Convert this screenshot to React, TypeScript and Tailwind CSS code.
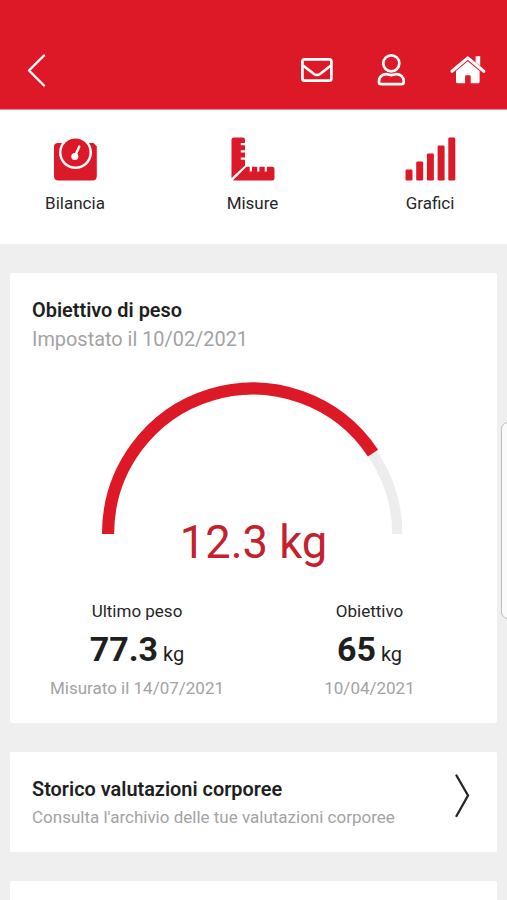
import type { ReactNode } from "react";

function Shortcut({ label, children }: { label: string; children: ReactNode }) {
  return (
    <button className="flex w-[120px] flex-col items-center">
      <svg width="60" height="50" viewBox="0 0 60 50" fill="#dc1928">
        {children}
      </svg>
      <span className="mt-[7px] text-[17px] leading-6 text-[#262626]">{label}</span>
    </button>
  );
}

function Header() {
  return (
    <header className="flex h-[110px] items-end justify-between border-b border-[#e88c93] bg-[#de1927] pr-[20px] pl-[26px] pb-[20px]">
      <svg width="22" height="38" viewBox="0 0 22 38" fill="none" stroke="#fff" strokeWidth="2.4" strokeLinecap="round" strokeLinejoin="round">
        <path d="M18 4.5 3 19.5 18 34.5" />
      </svg>
      <svg width="187" height="38" viewBox="300 51 187 38" fill="none" stroke="#fff" strokeWidth="2.7" strokeLinejoin="round">
        <rect x="302.4" y="59.4" width="29" height="21.2" rx="2.2" />
        <path d="M303 65.5 314 74 Q317 76 320 74 L331 65.5" />
        <circle cx="391.3" cy="63.3" r="8" />
        <path d="M386.3 74.1 Q391.3 76.2 396.3 74.1 C400.5 74.1 403.7 77 403.7 81 V82 Q403.7 84.2 401.5 84.2 H381.2 Q379 84.2 379 82 V81 C379 77 382.1 74.1 386.3 74.1Z" />
        <path d="M452 71.2 467.8 57.9 483.8 71.2" strokeWidth="3.1" strokeLinecap="round" />
        <path d="M475.6 56.2 H480.2 V66 L475.6 62.1Z M467.8 61.2 479.6 71 V82 Q479.6 83.2 478.4 83.2 H470.7 V76.2 Q470.7 75.2 469.7 75.2 H466.1 Q465.1 75.2 465.1 76.2 V83.2 H457.2 Q456 83.2 456 82 V71Z" fill="#fff" stroke="none" />
      </svg>
    </header>
  );
}

function Gauge() {
  return (
    <svg className="block" width="310" height="160" viewBox="97 378 310 160" fill="none">
      <path d="M371.8 452.6 A145 145 0 0 1 397.3 534" stroke="#ededed" strokeWidth="10.2" />
      <path d="M108.1 534 A144.6 145 0 0 1 373 453.1" stroke="#de1927" strokeWidth="12.2" />
    </svg>
  );
}

function Measure({ title, value, note }: { title: string; value: string; note: string }) {
  return (
    <div className="flex flex-col items-center">
      <div className="text-[17px] leading-6 text-[#262626]">{title}</div>
      <div className="mt-[6px] flex h-10 items-baseline gap-[5px] text-[#1f1f1f]">
        <span className="text-[34px] leading-10 font-bold">{value}</span>
        <span className="text-[20px]">kg</span>
      </div>
      <div className="mt-[7px] text-[17px] leading-6 text-[#a3a3a3]">{note}</div>
    </div>
  );
}

export default function App() {
  return (
    <div className="relative h-[900px] w-[507px] overflow-hidden bg-[#efefef] font-[Roboto,sans-serif]">
      <Header />
      <nav className="flex h-[134px] justify-between bg-white pt-[24px] pr-[17px] pl-[15px]">
        <Shortcut label="Bilancia">
          <path d="M13 9 H48.500 L51.800 12.500 V42 Q51.800 46.500 47.300 46.500 H13.500 Q9 46.500 9 42 V12.500 Q9 9 13 9Z" />
          <circle cx="30.500" cy="18.500" r="16.500" fill="#fff" />
          <circle cx="30.500" cy="18.500" r="14" />
          <circle cx="29.800" cy="22.500" r="3.500" fill="#fff" />
          <path d="M30.500 21 34.300 12.500" stroke="#fff" strokeWidth="2.400" strokeLinecap="round" />
        </Shortcut>
        <Shortcut label="Misure">
          <path d="M10.700 3.500 H19.700 Q22 3.500 22 5.800 V9 H17.800 V11.200 H22 V16.300 H17.800 V18.500 H22 V23.600 H17.800 V25.800 H22 V31.500 L8.500 44 V5.700 Q8.500 3.500 10.700 3.500Z" />
          <path d="M23.500 32.700 H26.700 V37.500 H28.900 V32.700 H34.200 V37.500 H36.400 V32.700 H41.700 V37.500 H43.900 V32.700 H49.200 Q51.500 32.700 51.500 35 V44.200 Q51.500 46.500 49.200 46.500 H9.800Z" />
        </Shortcut>
        <Shortcut label="Grafici">
          <rect x="5.500" y="35.500" width="7" height="11" rx="1.200" />
          <rect x="16.200" y="27.500" width="7" height="19" rx="1.200" />
          <rect x="26.900" y="19.500" width="7" height="27" rx="1.200" />
          <rect x="37.600" y="11.500" width="7" height="35" rx="1.200" />
          <rect x="48.300" y="3.500" width="7" height="43" rx="1.200" />
        </Shortcut>
      </nav>

      <main className="flex flex-col gap-[29px] px-[10px] pt-[29px]">
        <section className="h-[450px] rounded-[2px] bg-white pt-[26px]">
          <h2 className="pl-[22px] text-[19.9px] leading-6 font-semibold text-[#1f1f1f]">Obiettivo di peso</h2>
          <p className="mt-[5px] pl-[22px] text-[19.9px] leading-6 text-[#a3a3a3]">Impostato il 10/02/2021</p>
          <div className="mt-[26px] pl-[87px]">
            <Gauge />
          </div>
          <div className="-mt-[21px] text-center text-[45.3px] leading-[52px] text-[#c4202d]">12.3 kg</div>
          <div className="mt-[30px] grid grid-cols-[254px_211px]">
            <Measure title="Ultimo peso" value="77.3" note="Misurato il 14/07/2021" />
            <Measure title="Obiettivo" value="65" note="10/04/2021" />
          </div>
        </section>

        <section className="flex h-[100px] items-start justify-between rounded-[2px] bg-white pt-[22px] pr-[26px] pl-[22px]">
          <div>
            <h2 className="mt-[4px] text-[19.9px] leading-6 font-semibold text-[#1f1f1f]">Storico valutazioni corporee</h2>
            <p className="mt-[3px] text-[17px] leading-6 text-[#a3a3a3]">Consulta l'archivio delle tue valutazioni corporee</p>
          </div>
          <svg width="18" height="46" viewBox="0 0 18 46" fill="none" stroke="#262626" strokeWidth="2.300" strokeLinecap="round">
            <path d="M3.500 1.500 15 21.500 3.500 42" />
          </svg>
        </section>

        <section className="h-[60px] rounded-[2px] bg-white" />
      </main>

      <div className="absolute top-[422px] left-[501px] h-[197px] w-[20px] rounded-[7px] border border-[#bdbdbd] bg-[#fafafa]" />
    </div>
  );
}
